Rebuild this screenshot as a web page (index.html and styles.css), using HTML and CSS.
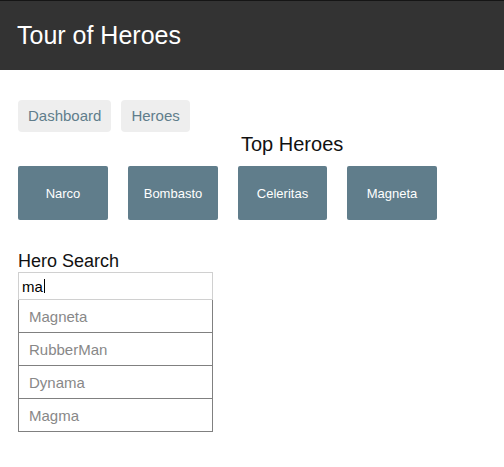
FILE: index.html
```html
<!DOCTYPE html>
<html>
<head>
<meta charset="utf-8">
<title>Tour of Heroes</title>
<link rel="stylesheet" href="styles.css">
</head>
<body>
<header class="topbar">
  <h1 class="title">Tour of Heroes</h1>
</header>
<main class="content">
  <nav class="nav">
    <a class="nav-link">Dashboard</a>
    <a class="nav-link">Heroes</a>
  </nav>
  <h3 class="section-title">Top Heroes</h3>
  <div class="grid">
    <div class="tile">Narco</div>
    <div class="tile">Bombasto</div>
    <div class="tile">Celeritas</div>
    <div class="tile">Magneta</div>
  </div>
  <section class="search">
    <h4 class="search-title">Hero Search</h4>
    <div class="search-box"><span class="search-text">ma</span><span class="caret"></span></div>
    <ul class="results">
      <li class="result">Magneta</li>
      <li class="result">RubberMan</li>
      <li class="result">Dynama</li>
      <li class="result">Magma</li>
    </ul>
  </section>
</main>
</body>
</html>
```

FILE: styles.css
```css
* { box-sizing: border-box; }
html, body {
  margin: 0;
  padding: 0;
  background: #fff;
  font-family: "Liberation Sans", Arial, sans-serif;
}
.topbar {
  height: 70px;
  background: #333;
  border-top: 1px solid #151515;
  display: flex;
  align-items: center;
  padding: 0 17px;
}
.title {
  margin: 0;
  color: #fff;
  font-size: 25px;
  font-weight: normal;
  line-height: 28px;
  position: relative;
  top: -1px;
}
.content {
  padding: 30px 18px 0;
}
.nav {
  display: flex;
  gap: 10px;
}
.nav-link {
  display: block;
  background: #eee;
  color: #607d8b;
  font-size: 15px;
  line-height: 18px;
  padding: 7px 10px 7px;
  border-radius: 4px;
}
.section-title {
  margin: 1px 0 0 223px;
  font-size: 20px;
  font-weight: normal;
  line-height: 23px;
  color: #111;
}
.grid {
  display: flex;
  gap: 20px;
  margin-top: 10px;
}
.tile {
  width: 90px;
  height: 54px;
  background: #607d8b;
  color: #fff;
  font-size: 13px;
  border-radius: 2px;
  display: flex;
  align-items: center;
  justify-content: center;
}
.grid .tile:nth-child(3) { width: 89px; }
.search {
  margin-top: 30px;
}
.search-title {
  margin: 0;
  font-size: 18px;
  font-weight: normal;
  line-height: 21px;
  color: #111;
  position: relative;
  top: 1px;
}
.search-box {
  width: 195px;
  height: 28px;
  margin-top: 1px;
  border: 1px solid #d0d0d0;
  padding: 0 3px;
  display: flex;
  align-items: center;
  font-size: 15px;
  color: #000;
}
.caret {
  display: inline-block;
  width: 1px;
  height: 14px;
  background: #000;
  margin-left: 1px;
}
.results {
  list-style: none;
  margin: 0;
  padding: 0;
  width: 195px;
}
.result {
  height: 33px;
  border: 1px solid #808080;
  border-top: none;
  padding-left: 10px;
  display: flex;
  align-items: center;
  font-size: 15px;
  color: #888;
}
```
